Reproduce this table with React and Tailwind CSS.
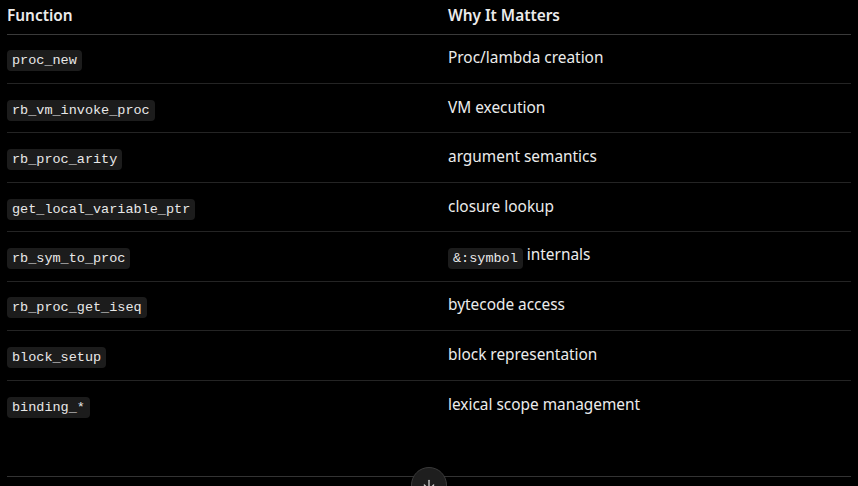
import React from "react";

const rows = [
  ["proc_new", [["t", "Proc/lambda creation"]]],
  ["rb_vm_invoke_proc", [["t", "VM execution"]]],
  ["rb_proc_arity", [["t", "argument semantics"]]],
  ["get_local_variable_ptr", [["t", "closure lookup"]]],
  ["rb_sym_to_proc", [["c", "&:symbol"], ["t", " internals"]]],
  ["rb_proc_get_iseq", [["t", "bytecode access"]]],
  ["block_setup", [["t", "block representation"]]],
  ["binding_*", [["t", "lexical scope management"]]],
];

function Code({ children }) {
  return (
    <code
      className="relative top-[2px] rounded-[4px] bg-[#1c1c1c] px-[5px] py-[3px] text-[13.5px] text-[#e8e8e8]"
      style={{ fontFamily: '"Liberation Mono", monospace' }}
    >
      {children}
    </code>
  );
}

export default function App() {
  return (
    <div
      className="h-[486px] w-[858px] overflow-hidden bg-black text-[15.4px] text-[#ececec]"
      style={{ fontFamily: '"Noto Sans", sans-serif' }}
    >
      <div className="px-[7px]">
        <table className="w-[844px] border-collapse text-left">
          <thead>
            <tr className="border-b border-[#3a3a3a]">
              <th className="h-[34px] w-[441px] p-0 pb-[3px] align-middle font-semibold">Function</th>
              <th className="h-[34px] p-0 pb-[3px] align-middle font-semibold">Why It Matters</th>
            </tr>
          </thead>
          <tbody>
            {rows.map(([fn, desc], i) => (
              <tr
                key={fn}
                className={i < rows.length - 1 ? "border-b border-[#242424]" : ""}
              >
                <td className="h-[49.45px] p-0 pb-[1px] align-middle leading-6">
                  <Code>{fn}</Code>
                </td>
                <td className="h-[49.45px] p-0 pb-[1px] align-middle leading-6">
                  {desc.map(([k, v], j) =>
                    k === "c" ? <Code key={j}>{v}</Code> : <span key={j}>{v}</span>
                  )}
                </td>
              </tr>
            ))}
          </tbody>
        </table>
        <div className="relative mt-[46px] h-px w-[844px] bg-[#333333]">
          <button className="absolute left-[404px] top-[-9px] flex h-[36px] w-[36px] items-center justify-center rounded-full border border-[#3a3a3a] bg-[#1e1e1e] text-[#d0d0d0]">
            <svg width="16" height="16" viewBox="0 0 24 24" fill="none" stroke="currentColor" strokeWidth="2" strokeLinecap="round" strokeLinejoin="round">
              <path d="M12 5v14" />
              <path d="M19 12l-7 7-7-7" />
            </svg>
          </button>
        </div>
      </div>
    </div>
  );
}
